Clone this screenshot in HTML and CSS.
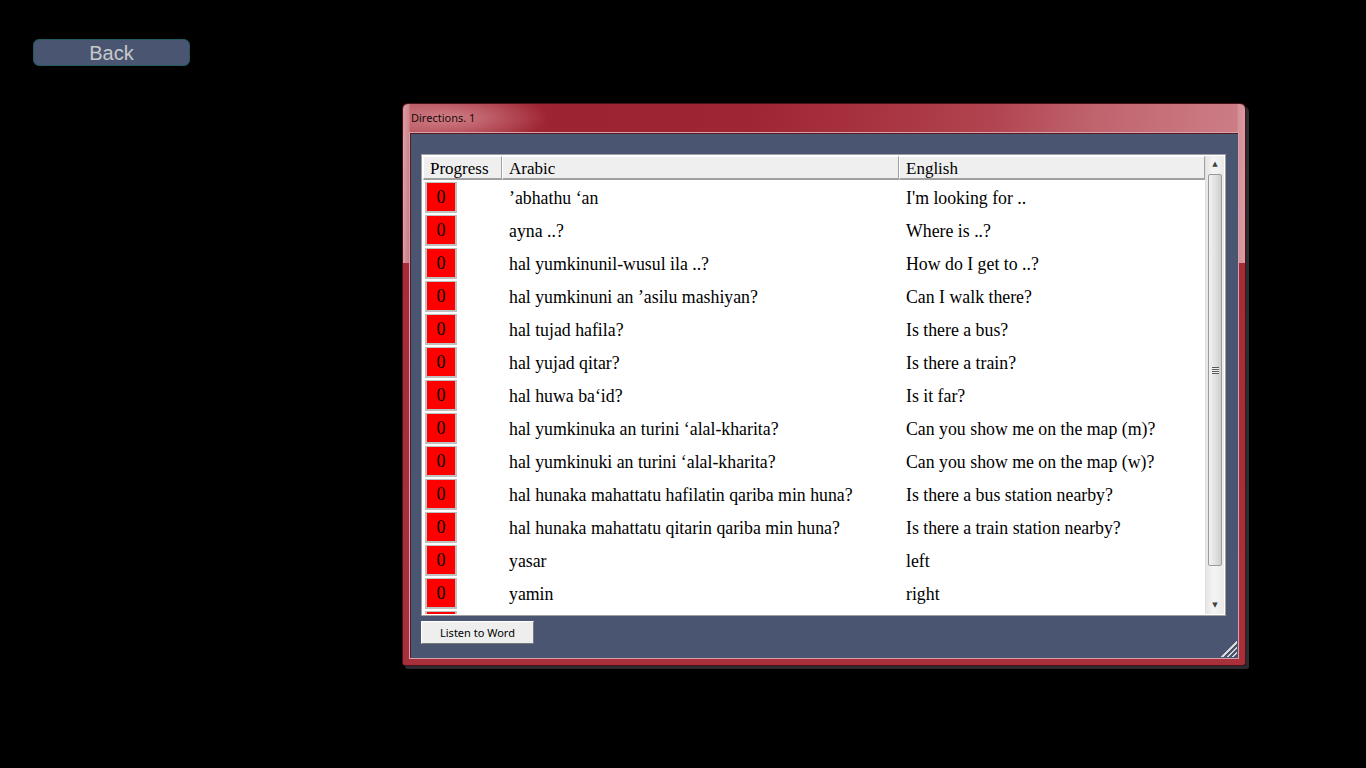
FILE: index.html
```
<!DOCTYPE html>
<html>
<head>
  <meta charset="utf-8">
  <title>Directions. 1</title>
  <link rel="stylesheet" href="styles.css">
</head>
<body>
  <div class="top">
    <button class="back_button">Back</button>
  </div>
  <div class="window">
    <div class="title_bar">Directions. 1</div>
    <div class="client">
      <div class="listview">
        <div class="list_main">
          <div class="list_header">
            <div class="col col_progress">Progress</div>
            <div class="col col_arabic">Arabic</div>
            <div class="col col_english">English</div>
          </div>
          <div class="list_rows">
            <div class="row"><div class="cell_progress"><span class="score">0</span></div><div class="cell_arabic">’abhathu ‘an</div><div class="cell_english">I'm looking for ..</div></div>
            <div class="row"><div class="cell_progress"><span class="score">0</span></div><div class="cell_arabic">ayna ..?</div><div class="cell_english">Where is ..?</div></div>
            <div class="row"><div class="cell_progress"><span class="score">0</span></div><div class="cell_arabic">hal yumkinunil-wusul ila ..?</div><div class="cell_english">How do I get to ..?</div></div>
            <div class="row"><div class="cell_progress"><span class="score">0</span></div><div class="cell_arabic">hal yumkinuni an ’asilu mashiyan?</div><div class="cell_english">Can I walk there?</div></div>
            <div class="row"><div class="cell_progress"><span class="score">0</span></div><div class="cell_arabic">hal tujad hafila?</div><div class="cell_english">Is there a bus?</div></div>
            <div class="row"><div class="cell_progress"><span class="score">0</span></div><div class="cell_arabic">hal yujad qitar?</div><div class="cell_english">Is there a train?</div></div>
            <div class="row"><div class="cell_progress"><span class="score">0</span></div><div class="cell_arabic">hal huwa ba‘id?</div><div class="cell_english">Is it far?</div></div>
            <div class="row"><div class="cell_progress"><span class="score">0</span></div><div class="cell_arabic">hal yumkinuka an turini ‘alal-kharita?</div><div class="cell_english">Can you show me on the map (m)?</div></div>
            <div class="row"><div class="cell_progress"><span class="score">0</span></div><div class="cell_arabic">hal yumkinuki an turini ‘alal-kharita?</div><div class="cell_english">Can you show me on the map (w)?</div></div>
            <div class="row"><div class="cell_progress"><span class="score">0</span></div><div class="cell_arabic">hal hunaka mahattatu hafilatin qariba min huna?</div><div class="cell_english">Is there a bus station nearby?</div></div>
            <div class="row"><div class="cell_progress"><span class="score">0</span></div><div class="cell_arabic">hal hunaka mahattatu qitarin qariba min huna?</div><div class="cell_english">Is there a train station nearby?</div></div>
            <div class="row"><div class="cell_progress"><span class="score">0</span></div><div class="cell_arabic">yasar</div><div class="cell_english">left</div></div>
            <div class="row"><div class="cell_progress"><span class="score">0</span></div><div class="cell_arabic">yamin</div><div class="cell_english">right</div></div>
            <div class="row"><div class="cell_progress"><span class="score"></span></div></div>
          </div>
        </div>
        <div class="scrollbar">
          <div class="scroll_arrow">&#9650;</div>
          <div class="scroll_track">
            <div class="scroll_thumb"><span class="grip"></span></div>
          </div>
          <div class="scroll_arrow">&#9660;</div>
        </div>
      </div>
      <button class="listen_button">Listen to Word</button>
      <div class="grip_corner"></div>
    </div>
  </div>
</body>
</html>
```
FILE: styles.css
```
html, body {margin: 0; padding: 0; background: #000;}
body {width: 1366px; height: 768px; overflow: hidden; font-family: "Liberation Serif", serif;}

.top {height: 66px; padding-left: 33px; box-sizing: border-box; padding-top: 39px;}
.back_button {display: block; width: 157px; height: 27px; margin: 0; padding: 0;
  background: #4a5572; border: 1px solid #1e5a5e; border-radius: 6px;
  color: #c9c9c9; font-family: "Liberation Sans", Arial, sans-serif; font-size: 20px; line-height: 24px;}

/* glass frame: pale upper half, red lower half, glow behind the title */
.window {margin: 37px 0 0 402px; width: 844px; height: 563px; box-sizing: border-box;
  border: 1px solid #4a1218; border-radius: 6px 6px 3px 3px;
  background:
    radial-gradient(ellipse 100px 26px at 45px 14px, rgba(215,140,148,0.85), rgba(215,140,148,0) 100%),
    linear-gradient(90deg, rgba(255,235,240,0.55) 0px, rgba(255,235,240,0.35) 6px, rgba(255,255,255,0) 7px) 0 0 / 100% 159px no-repeat,
    linear-gradient(270deg, rgba(255,220,225,0.3) 0px, rgba(255,220,225,0.2) 7px, rgba(255,255,255,0) 8px) 0 0 / 100% 159px no-repeat,
    linear-gradient(100deg, #b44f59 0%, #a83440 6%, #9c2330 18%, #9e2632 40%, #a83440 55%, #b14450 68%, #c0646e 80%, #c97780 92%, #cd8088 100%) 0 0 / 100% 159px no-repeat,
    linear-gradient(180deg, #a52b36, #a7303b);
  box-shadow: 3px 3px 0 #2c2c30;
  padding: 0 6px 6px 6px; position: relative;}
.title_bar {height: 28px; font-family: "Noto Sans", "Liberation Sans", sans-serif; font-size: 11px;
  color: #1a0a0a; line-height: 28px; padding-left: 2px;}
.client {height: 527px; background: #4a5572; border: 1px solid #d8a0a8; box-sizing: border-box;
  padding: 21px 0 0 11px; position: relative; box-shadow: inset 1px 1px 0 #5a1a22;}

.listview {width: 805px; height: 462px; background: #fff; border: 1px solid #a0a0a0; box-sizing: border-box;
  display: flex; padding: 1px;}
.list_main {flex: 1; overflow: hidden; display: flex; flex-direction: column;}
.list_header {display: flex; height: 24px; flex: none;}
.col {background: #efefef; border: 1px solid #fff; border-right-color: #a0a0a0; border-bottom: 2px solid #a0a0a0;
  box-sizing: border-box; font-size: 17px; line-height: 23px; padding-left: 6px; color: #000;}
.col_progress {width: 79px;}
.col_arabic {width: 397px;}
.col_english {flex: 1;}

.list_rows {flex: 1; overflow: hidden; padding-top: 2px;}
.row {display: flex; height: 33px; font-size: 17.8px; color: #000;}
.cell_progress {width: 79px; padding-left: 2px; box-sizing: border-box;}
.score {display: block; width: 28px; height: 28px; background: #ff0000; border: 2px solid #c0c0c0; border-top: 1px solid #c0c0c0;
  border-bottom: 2px solid #c0c0c0; text-align: center; line-height: 29px; font-size: 18px;}
.cell_arabic {width: 397px; padding-left: 7px; line-height: 33px; box-sizing: border-box;}
.cell_english {flex: 1; padding-left: 7px; line-height: 33px;}

.scrollbar {width: 18px; display: flex; flex-direction: column; background: linear-gradient(90deg, #e6e6e6, #f4f4f4 40%, #eaeaea); border-left: 1px solid #e0e0e0;}
.scroll_arrow {height: 17px; font-size: 7px; color: #404040; text-align: center; line-height: 17px; font-family: "DejaVu Sans", sans-serif;}
.scroll_track {flex: 1; padding-top: 1px;}
.scroll_thumb {height: 390px; margin: 0 2px 0 2px; border: 1px solid #9a9a9a; border-radius: 2px;
  background: linear-gradient(90deg, #f2f2f2, #e2e2e2 50%, #cdcdcd); display: flex; align-items: center; justify-content: center;}
.grip {display: block; width: 7px; height: 7px;
  background: repeating-linear-gradient(180deg, #5a5a5a 0 1px, #f0f0f0 1px 2px);}

.listen_button {display: block; margin-top: 5px; width: 113px; height: 23px; padding: 0;
  background: #eeeeee; border: 1px solid #fff; border-right-color: #7a7a7a; border-bottom-color: #7a7a7a;
  font-family: "Noto Sans", "Liberation Sans", sans-serif; font-size: 11px; color: #000;}
.grip_corner {position: absolute; right: 1px; bottom: 1px; width: 16px; height: 16px;
  background: linear-gradient(135deg, transparent 50%, #d8d8d8 50%, #d8d8d8 58%, transparent 58%, transparent 66%, #d8d8d8 66%, #d8d8d8 74%, transparent 74%, transparent 82%, #d8d8d8 82%, #d8d8d8 90%, transparent 90%);}
```
